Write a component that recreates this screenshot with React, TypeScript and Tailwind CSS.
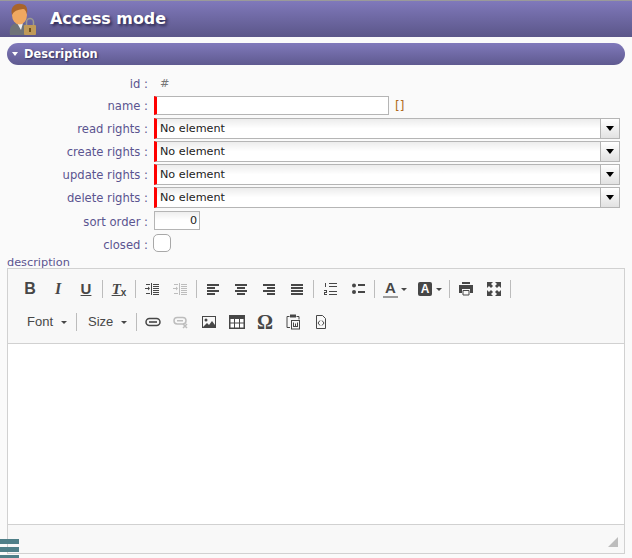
import React from 'react';

const Sep = () => <span className="w-px h-[18px] bg-[#bcbcbc] mx-[2px] shrink-0" />;

const Btn = ({ children }: { children: React.ReactNode }) => (
  <span className="flex items-center justify-center w-[28px] h-[20px] shrink-0">{children}</span>
);

const Ico = ({ children }: { children: React.ReactNode }) => (
  <svg width={16} height={16} viewBox="0 0 16 16" fill="#474747">{children}</svg>
);

const Caret = () => <span className="block w-0 h-0 border-x-[3px] border-x-transparent border-t-[3px] border-t-[#474747] shrink-0" />;

const Lines = ({ rows }: { rows: number[][] }) => (
  <Ico>
    {rows.map((r, i) => <rect key={i} x={r[0]} y={r[1]} width={r[2]} height={2} />)}
  </Ico>
);

const Indent = ({ color }: { color: string }) => (
  <Ico>
    <rect x="7" y="2" width="1" height="12" fill={color} />
    <rect x="9" y="3" width="6" height="1" fill={color} /><rect x="9" y="5" width="6" height="1" fill={color} />
    <rect x="9" y="7" width="6" height="1" fill={color} /><rect x="9" y="9" width="6" height="1" fill={color} />
    <rect x="9" y="11" width="6" height="1" fill={color} /><rect x="9" y="13" width="6" height="1" fill={color} />
    <rect x="2" y="3" width="4" height="1" fill={color} /><rect x="2" y="12" width="4" height="1" fill={color} />
    <rect x="1" y="7" width="3" height="1" fill={color} /><path d="M4 5.500 6 7.500 4 9.500z" fill={color} />
  </Ico>
);

const Field = ({ label, labelClass = '', children }: { label: string; labelClass?: string; children: React.ReactNode }) => (
  <div className="flex items-center">
    <span className={`w-[148px] text-right text-[#5a5490] shrink-0 whitespace-nowrap text-[11.6px] leading-[14px] ${labelClass}`}>{label} :</span>
    <div className="ml-[6px] flex-1 flex items-center">{children}</div>
  </div>
);

const Select = ({ label }: { label: string }) => (
  <Field label={label}>
    <div className="flex w-[466px] h-[21px] border border-[#b5b5b5] border-l-[3px] border-l-[#ff0000] bg-linear-to-b from-[#ececec] via-white to-white">
      <span className="flex-1 pl-[3px] text-[#222] text-[11.2px] leading-[19px]">No element</span>
      <span className="w-[19px] border-l border-[#b5b5b5] bg-linear-to-b from-white to-[#e2e2e2] flex items-center justify-center">
        <span className="w-0 h-0 border-x-[4px] border-x-transparent border-t-[5px] border-t-black" />
      </span>
    </div>
  </Field>
);

export default function App() {
  return (
    <div className="relative w-[632px] h-[558px] overflow-hidden bg-[#fafafa] text-[12px] font-['DejaVu_Sans','Liberation_Sans',sans-serif]">
      <header className="h-[37px] border-t border-[#9a9a9a] flex items-center bg-linear-to-b from-[#8079bb] to-[#5b5689]">
        <svg width="28" height="33" viewBox="0 0 28 33" className="ml-[9px]">
          <path d="M1 32c-1-7 1-11 7-12l4 3 3-2c3 1 4 3 4 6v5z" fill="#6f7378" />
          <path d="M8 20l4 7 2-7-3 1z" fill="#f0f0f0" />
          <ellipse cx="10.500" cy="12" rx="7.500" ry="9.500" fill="#f0a860" />
          <path d="M3 12C1 4 6 0 12 1c5 0 7 4 6 10-1-3-2-5-4-5-3 1-8 0-11 6z" fill="#a9642a" />
          <rect x="15" y="22" width="12" height="10" rx="1" fill="#c09a58" />
          <path d="M17.500 22v-3a3.500 3.500 0 0 1 7 0v3" fill="none" stroke="#9c9a90" strokeWidth="1.500" />
          <rect x="20" y="25" width="2" height="4" fill="#6e5020" />
        </svg>
        <h1 className="ml-[13px] text-[15.9px] font-bold text-white [text-shadow:2px_2px_3px_#2c2850]">Access mode</h1>
      </header>

      <section className="mx-[7px] mt-[6px] w-[618px] h-[22px] rounded-full flex items-center bg-linear-to-b from-[#8079bb] to-[#5f5a90]">
        <span className="ml-[5px] w-0 h-0 border-x-[3.500px] border-x-transparent border-t-[4px] border-t-white" />
        <span className="ml-[6px] text-[11.4px] leading-[14px] font-bold text-white [text-shadow:1px_1px_2px_#2c2850]">Description</span>
      </section>

      <div className="mt-[8px] flex flex-col">
        <div className="h-[20px]"><Field label="id" labelClass="pt-[4px]"><span className="text-[#777] text-[11.2px] leading-[14px] ml-[6px] pt-[4px]">#</span></Field></div>
        <div className="mt-[3px] h-[20px]">
          <Field label="name">
            <input className="w-[235px] h-[19px] border border-[#b5b5b5] border-l-[3px] border-l-[#ff0000] bg-white outline-none" />
            <span className="ml-[6px] text-[#b06a20]">[]</span>
          </Field>
        </div>
        <div className="mt-[2px] flex flex-col gap-[2px]">
          <Select label="read rights" />
          <Select label="create rights" />
          <Select label="update rights" />
          <Select label="delete rights" />
        </div>
        <div className="mt-[3px]">
          <Field label="sort order" labelClass="pt-[2px]">
            <div className="w-[46px] h-[19px] mb-px border border-[#b5b5b5] bg-linear-to-b from-[#eee] via-white to-white text-right pr-[2px] text-[11.2px] leading-[17px] text-[#222]">0</div>
          </Field>
        </div>
        <div className="mt-[3px]">
          <Field label="closed" labelClass="pt-[4px]">
            <span className="w-[18px] h-[18px] -ml-px rounded-[5px] border border-[#a8a8a8] bg-white" />
          </Field>
        </div>
      </div>

      <div className="ml-[7px] mt-[4px] text-[#5a5490] text-[11.3px] leading-[14px]">description</div>

      <div className="mx-[7px] -mt-[2px] w-[618px] h-[286px] border border-[#d1d1d1] flex flex-col bg-[#f8f8f8] font-['Liberation_Sans',sans-serif]">
        <div className="h-[75px] border-b border-[#d1d1d1] pl-[8px] text-[#474747]">
          <div className="flex items-center h-[20px] mt-[10px]">
            <Btn><span className="font-bold text-[16px]">B</span></Btn>
            <Btn><span className="italic font-bold text-[16px] font-['Liberation_Serif',serif]">I</span></Btn>
            <Btn><span className="font-bold text-[15px] underline">U</span></Btn>
            <Sep />
            <Btn><span className="italic font-bold text-[15px] underline font-['Liberation_Serif',serif]">T<sub className="text-[10px] not-italic font-['Liberation_Sans',sans-serif]">x</sub></span></Btn>
            <Sep />
            <Btn><Indent color="#474747" /></Btn>
            <Btn><Indent color="#bdbdbd" /></Btn>
            <Sep />
            <Btn><Lines rows={[[2, 3, 12], [2, 6, 8], [2, 9, 12], [2, 12, 8]]} /></Btn>
            <Btn><Lines rows={[[2, 3, 12], [4, 6, 8], [2, 9, 12], [4, 12, 8]]} /></Btn>
            <Btn><Lines rows={[[2, 3, 12], [6, 6, 8], [2, 9, 12], [6, 12, 8]]} /></Btn>
            <Btn><Lines rows={[[2, 3, 12], [2, 6, 12], [2, 9, 12], [2, 12, 12]]} /></Btn>
            <Sep />
            <Btn>
              <Ico>
                <path d="M3 2h1v4H3zM2 9h3v3H3v1h2v1H2v-3h2v-1H2z" />
                <rect x="7" y="2" width="8" height="1" /><rect x="7" y="5" width="8" height="1" />
                <rect x="7" y="10" width="8" height="1" /><rect x="7" y="13" width="8" height="1" />
              </Ico>
            </Btn>
            <Btn>
              <Ico>
                <circle cx="4" cy="4.500" r="2" /><circle cx="4" cy="11" r="2" />
                <rect x="8" y="3" width="7" height="2" /><rect x="8" y="10" width="7" height="2" />
              </Ico>
            </Btn>
            <Sep />
            <span className="flex items-center w-[34px] h-[20px] pl-[6px] shrink-0">
              <span className="flex flex-col items-center w-[15px]">
                <span className="font-bold text-[15px] leading-[14px]">A</span>
                <span className="w-[15px] h-[2px] mt-[1px] bg-[#9a9a9a]" />
              </span>
              <span className="ml-[3px]"><Caret /></span>
            </span>
            <span className="flex items-center w-[36px] h-[20px] pl-[7px] shrink-0">
              <span className="w-[14px] h-[14px] rounded-[2px] bg-[#474747] text-white font-bold text-[12px] leading-[14px] text-center">A</span>
              <span className="ml-[4px]"><Caret /></span>
            </span>
            <Sep />
            <Btn>
              <Ico>
                <rect x="4" y="1" width="8" height="2" />
                <path d="M1 4h14v8h-3V8H4v4H1z" />
                <path d="M5 9.500h6v4.500H5z" fill="none" stroke="#474747" />
              </Ico>
            </Btn>
            <Btn>
              <Ico>
                <path d="M1 1h6L5 3l2 2-2 2-2-2-2 2zM15 1v6L13 5l-2 2-2-2 2-2-2-2zM1 15V9l2 2 2-2 2 2-2 2 2 2zM15 15H9l2-2-2-2 2-2 2 2 2-2z" />
              </Ico>
            </Btn>
            <Sep />
          </div>
          <div className="flex items-center h-[20px] mt-[13px]">
            <span className="flex items-center w-[58px] pl-[11px] text-[13px] text-[#474747] shrink-0">
              <span className="w-[34px]">Font</span>
              <Caret />
            </span>
            <Sep />
            <span className="flex items-center w-[55px] pl-[9px] text-[13px] text-[#474747] shrink-0">
              <span className="w-[33px]">Size</span>
              <Caret />
            </span>
            <Sep />
            <Btn>
              <Ico>
                <rect x="1" y="4.500" width="14" height="7" rx="3.500" fill="none" stroke="#474747" strokeWidth="1.500" />
                <rect x="4" y="7.200" width="8" height="1.600" />
              </Ico>
            </Btn>
            <Btn>
              <Ico>
                <rect x="1" y="3.500" width="12" height="6.500" rx="3.200" fill="none" stroke="#bdbdbd" strokeWidth="1.500" />
                <rect x="4" y="6" width="6" height="1.500" fill="#bdbdbd" />
                <path d="M10 10l4 4M14 10l-4 4" stroke="#bdbdbd" strokeWidth="1.500" />
              </Ico>
            </Btn>
            <Btn>
              <Ico>
                <rect x="1.500" y="2.500" width="13" height="11" fill="none" stroke="#474747" />
                <circle cx="5" cy="6" r="1.500" />
                <path d="M2 13l4-4 2 2 3-4 3 4v2z" />
              </Ico>
            </Btn>
            <Btn>
              <svg width={16} height={14} viewBox="0 0 16 14">
                <rect width="16" height="14" fill="#474747" />
                <rect x="1.500" y="4" width="3.500" height="3.500" fill="#fff" /><rect x="6" y="4" width="4" height="3.500" fill="#fff" /><rect x="11" y="4" width="3.500" height="3.500" fill="#fff" />
                <rect x="1.500" y="8.500" width="3.500" height="4" fill="#fff" /><rect x="6" y="8.500" width="4" height="4" fill="#fff" /><rect x="11" y="8.500" width="3.500" height="4" fill="#fff" />
              </svg>
            </Btn>
            <Btn><span className="font-bold text-[20px] font-['Liberation_Serif',serif]">Ω</span></Btn>
            <Btn>
              <Ico>
                <path d="M4.500 2.500h-2.500v11h3M11.500 2.500h2.500v3" fill="none" stroke="#474747" />
                <rect x="5" y="0.500" width="6" height="3" />
                <rect x="6.500" y="6.500" width="8" height="8.500" fill="none" stroke="#474747" />
                <path d="M8 8.500v4.500h5V8.500h-1v3.500h-1V9.500h-1V12H9V8.500z" />
              </Ico>
            </Btn>
            <Btn>
              <Ico>
                <path d="M3.500 1.500h6l3 3v10h-9z" fill="none" stroke="#474747" />
                <path d="M7 6.500L5 9l2 2.500M9 6.500l2 2.500-2 2.500" fill="none" stroke="#474747" />
              </Ico>
            </Btn>
          </div>
        </div>
        <div className="h-[181px] bg-white border-b border-[#d1d1d1]" />
        <div className="flex-1 relative">
          <svg width="12" height="12" viewBox="0 0 12 12" className="absolute right-[5px] bottom-[5px]">
            <path d="M1 11 11 1v10z" fill="#bdbdbd" />
          </svg>
        </div>
      </div>

      <div className="absolute left-0 top-[539px] w-[19px] flex flex-col gap-[3px]">
        <span className="h-[5px] bg-[#4f7f88]" />
        <span className="h-[5px] bg-[#4f7f88]" />
        <span className="h-[5px] bg-[#4f7f88]" />
      </div>
    </div>
  );
}
